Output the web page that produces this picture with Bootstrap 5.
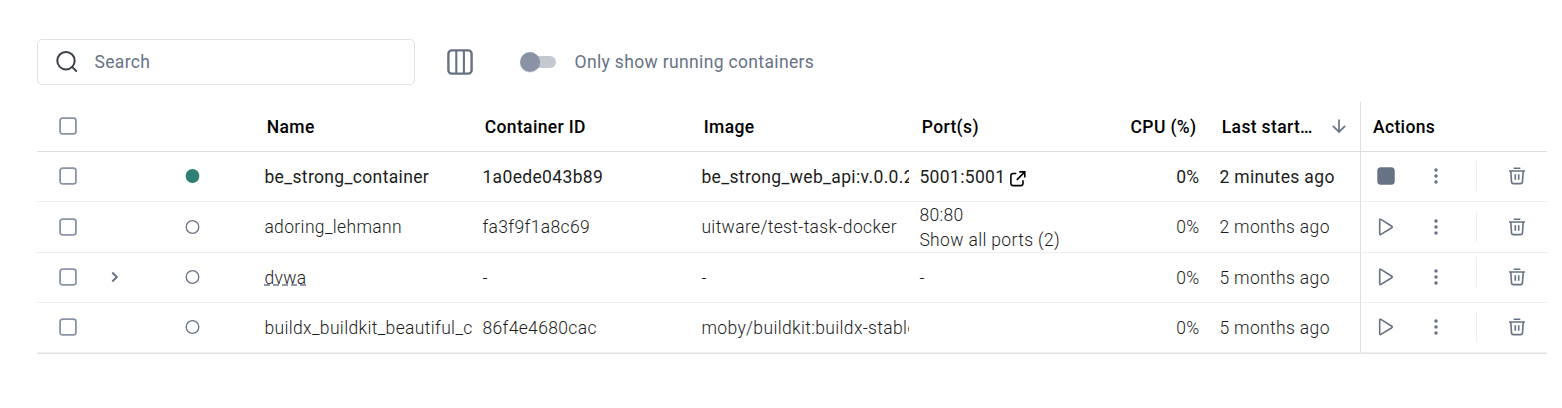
<!DOCTYPE html>
<html lang="en">
<head>
<meta charset="utf-8">
<meta name="viewport" content="width=device-width, initial-scale=1">
<title>Containers</title>
<link rel="stylesheet" href="https://cdn.jsdelivr.net/npm/bootstrap@5.3.0/dist/css/bootstrap.min.css">
<style>
  body { font-family: Roboto, sans-serif; font-size: 17.5px; line-height: 25px; color: #000; background: #fff; overflow: hidden; letter-spacing: .35px; }
  .page { padding: 39px 15px 0 37px; }
  .toolbar { height: 46px; margin-bottom: 17px; color: #677285; }
  .search-box { width: 378px; border-color: #e1e2e6 !important; border-radius: 5px; padding-left: 17px; }
  .search-box input { color: #677285; padding: 0 0 0 15.5px; font-size: 17.5px; letter-spacing: .35px; box-shadow: none !important; }
  .search-box input::placeholder { color: #677285; opacity: 1; }
  .columns-btn { margin-left: 32px; color: #677285; }
  .toggle { width: 37px; height: 22px; margin-left: 46px; }
  .toggle-label { margin-left: 18.5px; }
  svg { display: block; flex: none; }
  .containers { table-layout: fixed; width: 1510px; border-collapse: separate; border-spacing: 0; margin: 0; }
  .containers th, .containers td { padding: 1px 0 0 10.4px; height: 50px; border: 0 solid #efeff2; border-bottom-width: 1px; white-space: nowrap; overflow: hidden; vertical-align: middle; }
  .containers th { font-weight: 500; padding-left: 12.8px; border-bottom-color: #e0e0e0; }
  .containers td { font-weight: 300; color: #1c1c1c; }
  .containers .running td { font-weight: 400; }
  .containers .tall td { height: 51px; padding-top: 0; }
  .containers .tall .two-line { padding-top: 1px; }
  .two-line div { margin-bottom: -1px; }
  .containers .pick { padding-left: 22px; color: #8993a5; }
  .containers .expand { padding-left: 4px; color: #677285; }
  .containers .state { padding-left: 8px; color: #677285; }
  .pick svg, .expand svg, .state svg, .tools { margin-bottom: 2px; }
  .tall .pick svg, .tall .state svg, .tall .tools { margin-bottom: 0; }
  .containers .num { text-align: right; padding-left: 0; padding-right: 9.5px; }
  .containers th.num { padding-right: 12.5px; }
  .containers .acts { border-left: 1px solid #e0e0e0; padding-left: 12px; }
  .table-end { height: 1px; background: #e0e0e0; }
  .group-name { display: inline-block; line-height: 20px; height: 18px; background: repeating-linear-gradient(90deg, #8f9aad 0 6px, transparent 6px 9px) 0 100% / 100% 2px no-repeat; }
  .tools { color: #677285; padding-left: 3px; height: 40px; }
  .tools .run { width: 20px; }
  .tools .sep { width: 1px; height: 30px; background: #efeff2; margin: 0 31px 0 38px; }
  .tools .sep-raised { margin-bottom: 10px; }
  .tools .more { margin-left: 38px; }
</style>
</head>
<body>
<svg width="0" height="0" class="position-absolute" aria-hidden="true">
  <symbol id="i-check" viewBox="0 0 18 18"><rect x="1.1" y="1.1" width="15.8" height="15.8" rx="2.4" fill="none" stroke="currentColor" stroke-width="1.8"/></symbol>
  <symbol id="i-ring" viewBox="0 0 15 14"><circle cx="7.500" cy="7" r="6.300" fill="none" stroke="currentColor" stroke-width="1.300"/></symbol>
  <symbol id="i-play" viewBox="0 0 16 18"><path d="M1.700 2.100c0-.8.6-1.100 1.200-.7l10.900 6.800c.6.4.6 1.100 0 1.500L2.900 16.400c-.6.4-1.200.1-1.200-.7z" fill="none" stroke="currentColor" stroke-width="1.600" stroke-linejoin="round"/></symbol>
  <symbol id="i-more" viewBox="0 0 4 16"><g fill="currentColor"><circle cx="2" cy="2" r="1.750"/><circle cx="2" cy="8" r="1.750"/><circle cx="2" cy="14" r="1.750"/></g></symbol>
  <symbol id="i-trash" viewBox="0 0 18 18"><g fill="none" stroke="currentColor" stroke-width="1.600"><path d="M1 4h16M5.700 1.300h6.600M2.800 4.200l.7 10.400c.1 1.300.8 2 2 2h7c1.200 0 1.900-.7 2-2l.7-10.400M7.300 7.200v5.600M10.700 7.200v5.600"/></g></symbol>
</svg>
<main class="page">
  <div class="toolbar d-flex align-items-center">
    <div class="search-box d-flex align-items-center border h-100">
      <svg width="24" height="24" viewBox="0 0 24 24" fill="none" stroke="#393f49" stroke-width="2"><circle cx="11" cy="10.700" r="8.700"/><path d="m16.800 16.600 5 5"/></svg>
      <input class="form-control border-0 bg-transparent" type="text" placeholder="Search" aria-label="Search">
    </div>
    <div class="columns-btn">
      <svg width="26" height="26" viewBox="0 0 26 26" fill="none" stroke="currentColor" stroke-width="2.400"><rect x="1.400" y="1.400" width="23.200" height="23.200" rx="3.400"/><path d="M9.300 1.500v23M16.900 1.500v23" stroke-width="2.100"/></svg>
    </div>
    <svg class="toggle" viewBox="0 0 37 22"><rect x="8" y="5" width="29" height="12" rx="6" fill="#c4c8d1"/><circle cx="11" cy="12" r="10" fill="#000" opacity=".1"/><circle cx="11" cy="11" r="10" fill="#8993a5"/></svg>
    <span class="toggle-label">Only show running containers</span>
  </div>

  <table class="containers">
    <colgroup>
      <col style="width:70px"><col style="width:70px"><col style="width:77px"><col style="width:218px"><col style="width:219px"><col style="width:218px"><col style="width:200px"><col style="width:100px"><col style="width:151px"><col style="width:187px">
    </colgroup>
    <thead>
      <tr>
        <th class="pick"><svg width="18" height="18"><use href="#i-check"/></svg></th><th></th><th></th>
        <th>Name</th><th>Container ID</th><th>Image</th><th>Port(s)</th><th class="num">CPU (%)</th>
        <th><div class="d-flex align-items-center justify-content-between">Last start…<svg width="14" height="14" viewBox="0 0 14 14" style="margin:0 14px 2px 0" fill="none" stroke="#677285" stroke-width="1.700"><path d="M7 .5v12.300M.9 6.900 7 13l6.100-6.100"/></svg></div></th>
        <th class="acts">Actions</th>
      </tr>
    </thead>
    <tbody>
      <tr class="running">
        <td class="pick"><svg width="18" height="18"><use href="#i-check"/></svg></td><td></td>
        <td class="state"><svg width="15" height="14" viewBox="0 0 15 14"><circle cx="7.500" cy="7" r="6.900" fill="#2e7f74"/></svg></td>
        <td>be_strong_container</td><td>1a0ede043b89</td><td>be_strong_web_api:v.0.0.2</td>
        <td><div class="d-flex align-items-center">5001:5001<svg width="16" height="16" viewBox="0 0 16 16" style="margin:3px 0 0 5px" fill="none" stroke="#000" stroke-width="1.600"><path d="M6.300 2.500H3.200C1.700 2.500.9 3.300.9 4.800v7.500c0 1.500.8 2.300 2.300 2.300h7.500c1.500 0 2.300-.8 2.300-2.300V9.300M9.300.9h5.500v5.500M14.600 1.100 6.800 8.900"/></svg></div></td>
        <td class="num">0%</td><td>2 minutes ago</td>
        <td class="acts"><div class="tools d-flex align-items-center"><span class="run d-flex justify-content-center"><svg width="18" height="18"><rect x=".3" y=".3" width="17.400" height="17.400" rx="3.500" fill="currentColor"/></svg></span><svg class="more" width="4" height="16"><use href="#i-more"/></svg><span class="sep"></span><svg width="18" height="18"><use href="#i-trash"/></svg></div></td>
      </tr>
      <tr class="tall">
        <td class="pick"><svg width="18" height="18"><use href="#i-check"/></svg></td><td></td>
        <td class="state"><svg width="15" height="14"><use href="#i-ring"/></svg></td>
        <td>adoring_lehmann</td><td>fa3f9f1a8c69</td><td>uitware/test-task-docker</td><td class="two-line"><div>80:80<br>Show all ports (2)</div></td>
        <td class="num">0%</td><td>2 months ago</td>
        <td class="acts"><div class="tools d-flex align-items-center"><span class="run d-flex justify-content-center"><svg width="16" height="18"><use href="#i-play"/></svg></span><svg class="more" width="4" height="16"><use href="#i-more"/></svg><span class="sep"></span><svg width="18" height="18"><use href="#i-trash"/></svg></div></td>
      </tr>
      <tr>
        <td class="pick"><svg width="18" height="18"><use href="#i-check"/></svg></td>
        <td class="expand"><svg width="8" height="12" viewBox="0 0 8 12" fill="none" stroke="currentColor" stroke-width="1.900"><path d="m1.300 1.500 4.500 4.500-4.500 4.500"/></svg></td>
        <td class="state"><svg width="15" height="14"><use href="#i-ring"/></svg></td>
        <td><span class="group-name">dvwa</span></td><td>-</td><td>-</td><td>-</td>
        <td class="num">0%</td><td>5 months ago</td>
        <td class="acts"><div class="tools d-flex align-items-center"><span class="run d-flex justify-content-center"><svg width="16" height="18"><use href="#i-play"/></svg></span><svg class="more" width="4" height="16"><use href="#i-more"/></svg><span class="sep sep-raised"></span><svg width="18" height="18"><use href="#i-trash"/></svg></div></td>
      </tr>
      <tr>
        <td class="pick"><svg width="18" height="18"><use href="#i-check"/></svg></td><td></td>
        <td class="state"><svg width="15" height="14"><use href="#i-ring"/></svg></td>
        <td>buildx_buildkit_beautiful_c</td><td>86f4e4680cac</td><td>moby/buildkit:buildx-stable</td><td></td>
        <td class="num">0%</td><td>5 months ago</td>
        <td class="acts"><div class="tools d-flex align-items-center"><span class="run d-flex justify-content-center"><svg width="16" height="18"><use href="#i-play"/></svg></span><svg class="more" width="4" height="16"><use href="#i-more"/></svg><span class="sep"></span><svg width="18" height="18"><use href="#i-trash"/></svg></div></td>
      </tr>
    </tbody>
  </table>
  <div class="table-end"></div>
</main>
<script src="https://cdn.jsdelivr.net/npm/bootstrap@5.3.0/dist/js/bootstrap.bundle.min.js"></script>
</body>
</html>
